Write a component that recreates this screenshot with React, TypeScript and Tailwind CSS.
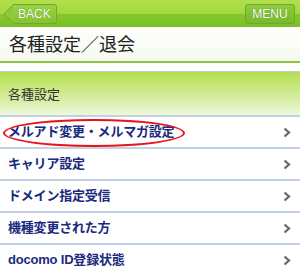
import React from "react";

const items = [
  "メルアド変更・メルマガ設定",
  "キャリア設定",
  "ドメイン指定受信",
  "機種変更された方",
  "docomo ID登録状態",
];

function Chevron() {
  return (
    <svg width="8" height="11" viewBox="0 0 8 11" className="shrink-0">
      <path d="M1.5 1.5 L6 5.5 L1.5 9.5" fill="none" stroke="#666" strokeWidth="2.2" />
    </svg>
  );
}

export default function App() {
  const font = { fontFamily: '"Liberation Sans", "Noto Sans CJK JP", sans-serif' };
  return (
    <div className="w-[300px] h-[277px] overflow-hidden bg-white relative" style={font}>
      {/* header */}
      <div className="h-[27px] bg-[linear-gradient(#b2e04c_0%,#a3d93f_50%,#86c82c_52%,#78bf26_100%)] flex items-center justify-between px-[4px]">
        <div className="relative h-[20px] ml-[2px] flex items-center">
          <div className="absolute left-[0px] top-[3px] w-[14px] h-[14px] rotate-45 bg-[#8cc93a] border-l border-b border-[#6fa82a] rounded-[2px]" />
          <div className="relative ml-[7px] h-[20px] px-[5px] flex items-center bg-[linear-gradient(#9ad347,#84c32f)] border border-l-0 border-[#6fa82a] rounded-r-[3px] text-white text-[12px] [text-shadow:0_0_1px_#4a7a1a]">
            BACK
          </div>
        </div>
        <div className="h-[20px] w-[50px] flex items-center justify-center bg-[linear-gradient(#8fcb3f,#79b92c)] border border-[#6fa82a] rounded-[3px] text-white text-[12px] [text-shadow:0_0_1px_#4a7a1a] mr-[1px]">
          MENU
        </div>
      </div>
      {/* title */}
      <div className="h-[36px] bg-[linear-gradient(#ffffff,#f5f9ee)] border-b-2 border-[#8cc63f] flex items-center pl-[9px] pt-[3px] text-[18px] text-[#222]">
        各種設定／退会
      </div>
      <div className="h-[8px] bg-white" />
      {/* section */}
      <div className="h-[44px] border-t border-[#c3cfe0] bg-[linear-gradient(#b4df4f,#def0b4_75%,#f0f8dc)] flex items-center pl-[8px] pt-[2px] text-[13px] text-[#333]">
        各種設定
      </div>
      {items.map((t, i) => (
        <div
          key={t}
          className="h-[32px] border-t-2 border-[#c3d1e6] flex items-center justify-between pl-[8px] pr-[9px] text-[13px] font-bold text-[#1a2a7e] relative"
        >
          <span className="tracking-[-0.2px]">{t}</span>
          <Chevron />
          {i === 0 && (
            <div className="absolute left-[3px] top-[2px] w-[182px] h-[28px] rounded-[50%] border-[2.5px] border-[#e8121a]" />
          )}
        </div>
      ))}
    </div>
  );
}
